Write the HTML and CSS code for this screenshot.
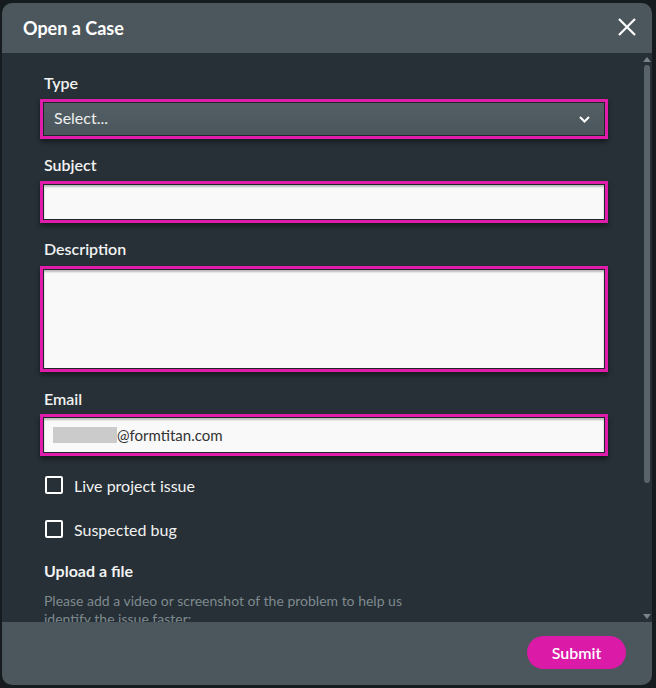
FILE: index.html
```html
<!DOCTYPE html>
<html>
<head>
<meta charset="utf-8">
<link rel="stylesheet" href="styles.css">
</head>
<body>
<div class="dialog">
  <div class="header">
    <span class="title">Open a Case</span>
    <svg class="close" width="18" height="18" viewBox="0 0 18 18"><path d="M1 1 L17 17 M17 1 L1 17" stroke="#fff" stroke-width="2.2" fill="none"/></svg>
  </div>
  <div class="body">
    <div class="content">
      <div class="label l-type">Type</div>
      <div class="box select">
        <div class="inner sel-inner">
          <span>Select...</span>
          <svg width="11" height="7" viewBox="0 0 11 7"><path d="M1 1 L5.5 5.5 L10 1" stroke="#fff" stroke-width="2" fill="none"/></svg>
        </div>
      </div>
      <div class="label l-next">Subject</div>
      <div class="box subject"><div class="inner txt"></div></div>
      <div class="label l-next l-desc">Description</div>
      <div class="box desc"><div class="inner txt"></div></div>
      <div class="label l-email">Email</div>
      <div class="box email"><div class="inner txt"><span class="blur"></span><span class="domain">@formtitan.com</span></div></div>
      <div class="check c1"><span class="cb"></span><span>Live project issue</span></div>
      <div class="check c2"><span class="cb"></span><span>Suspected bug</span></div>
      <div class="label l-upload">Upload a file</div>
      <p class="help">Please add a video or screenshot of the problem to help us identify the issue faster:</p>
    </div>
    <div class="scrollbar">
      <span class="arrow up"></span>
      <span class="thumb"></span>
      <span class="spacer"></span>
      <span class="arrow down"></span>
    </div>
  </div>
  <div class="footer">
    <button class="submit">Submit</button>
  </div>
</div>
</body>
</html>
```

FILE: styles.css
```css
html, body {
  margin: 0;
  padding: 0;
  background: #161b1f;
  font-family: Lato, "Noto Sans", sans-serif;
}
.dialog {
  margin: 3px 0 0 2px;
  width: 650px;
  height: 682px;
  border-radius: 10px;
  overflow: hidden;
  display: flex;
  flex-direction: column;
}
.header {
  height: 50px;
  flex: none;
  background: #4b575d;
  display: flex;
  align-items: center;
  justify-content: space-between;
  padding: 0 16px 0 21px;
}
.title {
  color: #fff;
  font-size: 18px;
  font-weight: 700;
}
.close { margin-top: -2px; }
.body {
  flex: 1;
  background: #263036;
  display: flex;
  overflow: hidden;
}
.content {
  flex: 1;
  padding: 0 34px 0 38px;
}
.label {
  color: #f2f2f2;
  font-size: 16px;
  font-weight: 600;
  height: 18px;
  line-height: 18px;
  padding-left: 4px;
  margin-bottom: 7px;
}
.l-type { margin-top: 21px; }
.l-next { margin-top: 17px; }
.l-desc { margin-bottom: 8px; }
.l-email { margin-top: 18px; margin-bottom: 6px; }
.l-upload { margin-top: 24px; font-weight: 700; }
.box {
  border: 3px solid #e01daa;
  box-shadow: 0 3px 5px rgba(0,0,0,0.45);
  box-sizing: border-box;
}
.inner {
  height: 100%;
  box-sizing: border-box;
  border: 1px solid #1e262a;
}
.select { height: 40px; }
.sel-inner {
  background: linear-gradient(#535f65, #4a565c);
  display: flex;
  align-items: center;
  justify-content: space-between;
  padding: 0 14px 3px 10px;
  color: #eef0f0;
  font-size: 16px;
}
.sel-inner svg { margin-top: 3px; }
.subject { height: 42px; }
.desc { height: 106px; }
.email { height: 42px; }
.txt {
  background: #f9f9f9;
  box-shadow: inset 0 2px 2px rgba(0,0,0,0.25);
}
.email .txt {
  display: flex;
  align-items: center;
  padding-left: 9px;
}
.blur {
  display: inline-block;
  width: 64px;
  height: 16px;
  background: #cbcbcb;
}
.domain {
  color: #333;
  font-size: 15px;
}
.check {
  display: flex;
  align-items: center;
  gap: 11px;
  color: #f2f2f2;
  font-size: 16px;
  padding-left: 5px;
  height: 18px;
}
.c1 { margin-top: 20px; }
.c2 { margin-top: 26px; }
.cb {
  width: 18px;
  height: 18px;
  box-sizing: border-box;
  border: 2px solid #fff;
  border-radius: 2px;
}
.help {
  margin: 12px 0 0 4px;
  color: #7f8a8f;
  font-size: 14px;
  line-height: 18px;
  width: 370px;
}
.scrollbar {
  width: 9px;
  margin-right: 1px;
  display: flex;
  flex-direction: column;
  align-items: center;
  padding: 4px 0 3px;
  box-sizing: border-box;
}
.arrow {
  width: 0;
  height: 0;
  border-left: 4px solid transparent;
  border-right: 4px solid transparent;
}
.up { border-bottom: 5px solid #78848a; }
.down { border-top: 5px solid #78848a; }
.thumb {
  margin-top: 3px;
  width: 6px;
  height: 418px;
  border-radius: 3px;
  background: #58646a;
}
.spacer { flex: 1; }
.footer {
  height: 63px;
  flex: none;
  background: #4b575d;
  display: flex;
  justify-content: flex-end;
  align-items: flex-start;
  padding: 14px 26px 0 0;
  box-sizing: border-box;
}
.submit {
  width: 99px;
  height: 33px;
  border: none;
  border-radius: 17px;
  background: #dc1aa8;
  color: #fff;
  font-family: Lato, "Noto Sans", sans-serif;
  font-size: 16px;
  font-weight: 600;
}
```
